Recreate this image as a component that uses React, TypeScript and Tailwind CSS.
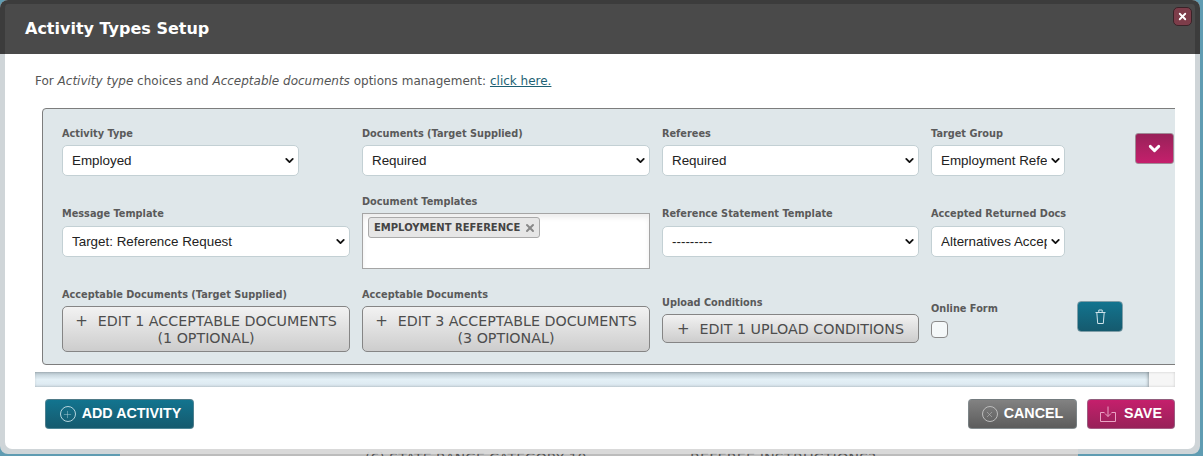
import React from "react";
import { ChevronDown, Plus, X } from "lucide-react";

const labelCls = "block whitespace-nowrap font-['DejaVu_Sans',sans-serif] text-[9.75px] leading-[12px] font-bold text-[#5a5a5a]";

// Native select with the arrow drawn on top, so it looks like the mac one
const SelectBox = ({ value, className }: { value: string; className: string }) => (
  <div className={`relative h-[31px] ${className}`}>
    <select
      defaultValue={value}
      className="h-full w-full appearance-none rounded-[5px] border border-[#c3d0d4] bg-white pl-[9px] pr-[17px] pt-[1px] font-['Liberation_Sans',sans-serif] text-[13.4px] text-[#222] outline-none"
    >
      <option>{value}</option>
    </select>
    <ChevronDown
      size={13}
      strokeWidth={3.4}
      className="pointer-events-none absolute right-[3px] top-[9px] text-[#111]"
    />
  </div>
);

const EditButton = ({ lines, className }: { lines: string[]; className: string }) => (
  <button className={`rounded-[5px] border border-[#858585] bg-gradient-to-b from-[#f2f2f2] to-[#cdcdcd] pt-[1px] font-['DejaVu_Sans',sans-serif] text-[14.25px] leading-[17px] text-[#4d4d4d] ${className}`}>
    <span className="block">
      <span className="mr-[10px] text-[15px]">+</span>
      {lines[0]}
    </span>
    {lines[1] && <span className="block">{lines[1]}</span>}
  </button>
);

const FooterButton = ({
  icon,
  label,
  className,
}: {
  icon: React.ReactNode;
  label: string;
  className: string;
}) => (
  <button
    className={`flex h-[30px] items-center justify-center gap-[6px] rounded-[4px] border border-[#8a9aa0]/50 font-['Liberation_Sans',sans-serif] text-[14.3px] font-bold text-white ${className}`}
  >
    {icon}
    <span className="-mt-[1px]">{label}</span>
  </button>
);

export default function App() {
  return (
    <div className="relative h-[456px] w-[1203px] overflow-hidden">
      {/* Page behind the dialog, only its edges show */}
      <div className="flex h-full">
        <div className="w-[120px] bg-[#5f9cb2]" />
        <div className="relative flex-1 bg-[#bcbcbc] font-['DejaVu_Sans',sans-serif] text-[14.5px] text-[#555]">
          <span className="absolute left-[245px] top-[448px] text-[14px]">(6) STATE RANGE CATEGORY 10</span>
          <span className="absolute left-[570px] top-[448px]">REFEREE INSTRUCTIONS?</span>
        </div>
        <div className="w-[125px] bg-[#5f9cb2]" />
      </div>

      {/* Dialog */}
      <div className="absolute left-0 top-0 h-[454px] w-[1200px] rounded-[8px] bg-[#dcdcdc]/90 px-[5px] pb-[5px]">
        <div className="relative -mx-[5px] h-[54px] rounded-t-[8px] border-x-[5px] border-t-[4px] border-[#3c3c3c] bg-[#4a4a4a]">
          <h1 className="pl-[20px] pt-[13px] font-['DejaVu_Sans',sans-serif] text-[16px] leading-[24px] font-bold text-white">
            Activity Types Setup
          </h1>
          <button className="absolute right-[3px] top-[3px] flex h-[19px] w-[19px] items-center justify-center rounded-[5px] border border-[#3a2328] bg-[#7d3d4a] text-white">
            <X size={11} strokeWidth={4} />
          </button>
        </div>

        <div className="h-[395px] rounded-b-[7px] bg-white pl-[30px] pr-[20px]">
          <p className="pt-[19px] font-['DejaVu_Sans',sans-serif] text-[12px] leading-[16px] text-[#555]">
            For <em>Activity type</em> choices and <em>Acceptable documents</em> options management:{" "}
            <a className="text-[#1d5f73] underline">click here.</a>
          </p>

          <div className="mt-[19px] overflow-hidden">
            <div className="ml-[7px] h-[257px] w-[1150px] rounded-[4px] border border-[#7d7d7d] bg-[#dfe7ea] pl-[19px]">
              <div className="flex h-[94px] gap-[12px]">
                <div className="w-[288px] pt-[19px]">
                  <label className={labelCls}>Activity Type</label>
                  <SelectBox value="Employed" className="mt-[5px] w-[237px]" />
                </div>
                <div className="w-[288px] pt-[19px]">
                  <label className={labelCls}>Documents (Target Supplied)</label>
                  <SelectBox value="Required" className="mt-[5px] w-full" />
                </div>
                <div className="w-[257px] pt-[19px]">
                  <label className={labelCls}>Referees</label>
                  <SelectBox value="Required" className="mt-[5px] w-full" />
                </div>
                <div className="w-[134px] pt-[19px]">
                  <label className={labelCls}>Target Group</label>
                  <SelectBox value="Employment Reference" className="mt-[5px] w-full" />
                </div>
                <div className="pl-[58px] pt-[24px]">
                  <button className="flex h-[31px] w-[39px] items-center justify-center rounded-[3px] border border-[#a08a96] bg-gradient-to-b from-[#982159] to-[#c51f6c] text-white">
                    <ChevronDown size={17} strokeWidth={4} />
                  </button>
                </div>
              </div>

              <div className="flex h-[85px] gap-[12px]">
                <div className="w-[288px] pt-[5px]">
                  <label className={labelCls}>Message Template</label>
                  <SelectBox value="Target: Reference Request" className="mt-[6px] w-full" />
                </div>
                <div className="w-[288px]">
                  <label className={`${labelCls} -mt-[7px]`}>Document Templates</label>
                  <div className="mt-[5px] h-[56px] border border-[#a5a5a5] bg-white pl-[5px] pt-[3px] shadow-[inset_0_4px_5px_rgba(0,0,0,0.07)]">
                    <span className="flex h-[21px] w-[172px] items-center gap-[4px] rounded-[3px] border border-[#aaa] bg-[#e6e6e6] pl-[5px] font-['DejaVu_Sans',sans-serif] text-[10px] font-bold text-[#444]">
                      EMPLOYMENT REFERENCE
                      <X size={12} strokeWidth={4} className="text-[#888]" />
                    </span>
                  </div>
                </div>
                <div className="w-[257px] pt-[5px]">
                  <label className={labelCls}>Reference Statement Template</label>
                  <SelectBox value="---------" className="mt-[6px] w-full" />
                </div>
                <div className="w-[134px] pt-[5px]">
                  <label className={labelCls}>Accepted Returned Docs</label>
                  <SelectBox value="Alternatives Accepted" className="mt-[6px] w-full" />
                </div>
              </div>

              <div className="flex gap-[12px]">
                <div className="w-[288px] pt-[1px]">
                  <label className={labelCls}>Acceptable Documents (Target Supplied)</label>
                  <EditButton
                    lines={["EDIT 1 ACCEPTABLE DOCUMENTS", "(1 OPTIONAL)"]}
                    className="mt-[5px] h-[46px] w-full"
                  />
                </div>
                <div className="w-[288px] pt-[1px]">
                  <label className={labelCls}>Acceptable Documents</label>
                  <EditButton
                    lines={["EDIT 3 ACCEPTABLE DOCUMENTS", "(3 OPTIONAL)"]}
                    className="mt-[5px] h-[46px] w-full"
                  />
                </div>
                <div className="w-[257px] pt-[9px]">
                  <label className={labelCls}>Upload Conditions</label>
                  <EditButton lines={["EDIT 1 UPLOAD CONDITIONS"]} className="mt-[5px] h-[29px] w-full" />
                </div>
                <div className="w-[134px] pt-[15px]">
                  <label className={labelCls}>Online Form</label>
                  <div className="mt-[6px] h-[17px] w-[17px] rounded-[4px] border border-[#8a8a8a] bg-[#f4f8f9]" />
                </div>
                <div className="pt-[13px]">
                  <button className="flex h-[31px] w-[46px] items-center justify-center rounded-[4px] border border-[#7f9ea8] bg-gradient-to-b from-[#12748f] to-[#155a6e]">
                    <svg width="11" height="16" viewBox="0 0 11 16" fill="none" stroke="#cfe3ea" strokeWidth="1">
                      <path d="M.5 3.5h10M3.8 3.5V1h3.4v2.5M1.8 3.5l.9 11h5.6l.9-11" />
                    </svg>
                  </button>
                </div>
              </div>
            </div>
          </div>

          {/* Scroll bar */}
          <div className="mt-[7px] h-[15px] bg-[#f6f6f6] shadow-[inset_0_0_3px_rgba(0,0,0,0.18)]">
            <div className="h-full w-[1114px] bg-gradient-to-b from-[#b9c8d0] via-[#e4f0f6] to-[#dbe8f0] shadow-[inset_-1px_0_3px_rgba(0,0,0,0.3)]" />
          </div>

          {/* Footer */}
          <div className="mt-[12px] flex items-center">
            <FooterButton
              className="ml-[10px] w-[149px] bg-gradient-to-b from-[#12748f] to-[#155a6e] pl-[2px]"
              label="ADD ACTIVITY"
              icon={
                <span className="flex h-[16px] w-[16px] items-center justify-center rounded-full border border-[#b5d5de] text-[#b5d5de]">
                  <Plus size={11} strokeWidth={1} />
                </span>
              }
            />
            <div className="ml-auto flex gap-[10px]">
              <FooterButton
                className="w-[109px] bg-gradient-to-b from-[#828282] to-[#5c5c5c]"
                label="CANCEL"
                icon={
                  <span className="flex h-[16px] w-[16px] items-center justify-center rounded-full border border-[#bdbdbd] text-[#bdbdbd]">
                    <X size={9} strokeWidth={1.5} />
                  </span>
                }
              />
              <FooterButton
                className="w-[88px] bg-gradient-to-b from-[#c51f6c] to-[#982159]"
                label="SAVE"
                icon={
                  <svg width="16" height="16" viewBox="0 0 16 16" fill="none" stroke="#eaa3c4" strokeWidth="1" className="mr-[2px]">
                    <path d="M4.5 6.5H.5v9h15v-9h-4M8 .5v10M5 7.5l3 3 3-3" />
                  </svg>
                }
              />
            </div>
          </div>
        </div>
      </div>
    </div>
  );
}
